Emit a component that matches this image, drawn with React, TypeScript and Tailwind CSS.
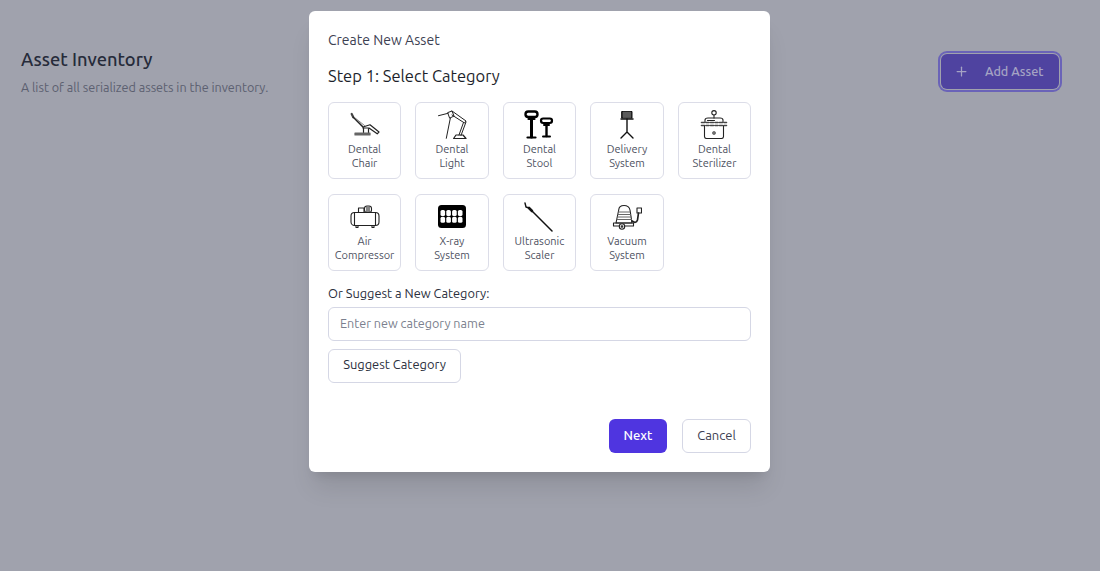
import React from 'react';
import { Plus } from 'lucide-react';

const FONT = 'font-["Ubuntu","Noto_Sans",sans-serif]';

function ChairIcon() {
  return (
    <svg width="30" height="25" viewBox="0 0 30 25" fill="none" stroke="#222" strokeWidth="1.2" strokeLinecap="round" strokeLinejoin="round">
      <path d="M1.700 2l1.600 3.300" strokeWidth="2.200" stroke="#444" />
      <path d="M3.300 5.300L12.500 14.500" strokeWidth="1.500" />
      <path d="M4.500 5.500L14.500 13.500" strokeWidth="0.800" stroke="#666" />
      <path d="M13 15l7-2.200 9 7.200-1.800 1.800-8.200-5.800h-6z" />
      <path d="M13.500 16v4.500M18.500 16.500v4" />
      <path d="M5 21h15v2H5z" fill="#666" stroke="#666" />
    </svg>
  );
}

function LightIcon() {
  return (
    <svg width="29" height="29" viewBox="0 0 29 29" fill="none" stroke="#222" strokeWidth="1" strokeLinecap="round" strokeLinejoin="round">
      <path d="M0.500 5.700L10 3.300" />
      <path d="M10 2.500l4-1.500 2 5-4 2z" />
      <path d="M12.300 8.300L8.300 28.300" />
      <path d="M14 1l14 10-1.500 2L14 5" />
      <path d="M28 12l-5 13.500M25.500 12.500L21 25" />
      <path d="M18 25h7l3 3.500H15.600z" strokeWidth="1.200" />
    </svg>
  );
}

function StoolIcon() {
  return (
    <svg width="30" height="29" viewBox="0 0 30 29" fill="none" stroke="#000" strokeLinecap="round" strokeLinejoin="round">
      <rect x="1.500" y="1.500" width="12" height="5.500" rx="2.700" strokeWidth="2.400" />
      <path d="M4.500 9h6" strokeWidth="2.200" />
      <path d="M7.500 9v18" strokeWidth="3" />
      <path d="M3.500 27.500h8" strokeWidth="2.200" />
      <rect x="17" y="8.500" width="11" height="4.500" rx="2.200" strokeWidth="2.200" />
      <path d="M20 15h5" strokeWidth="2" />
      <path d="M22.500 15v11" strokeWidth="2.400" />
      <path d="M19 26.500h7" strokeWidth="2" />
    </svg>
  );
}

function DeliveryIcon() {
  return (
    <svg width="14" height="28" viewBox="0 0 14 28" fill="none" stroke="#111" strokeLinecap="round" strokeLinejoin="round">
      <rect x="2" y="0.500" width="10" height="6.500" fill="#333" strokeWidth="1" />
      <path d="M4 1v6M6 1v6M8 1v6M10 1v6" stroke="#bbb" strokeWidth="0.600" />
      <path d="M1 8h12" strokeWidth="1.500" />
      <path d="M7 8v13M7 21l-6 6M7 21l6 6" strokeWidth="1.400" />
    </svg>
  );
}

function SterilizerIcon() {
  return (
    <svg width="28" height="29" viewBox="0 0 28 29" fill="none" stroke="#222" strokeWidth="1.100" strokeLinecap="round" strokeLinejoin="round">
      <circle cx="14" cy="2.800" r="2.200" />
      <path d="M14 5v3" />
      <path d="M5 12v-2q0-2 3-2h12q3 0 3 2v2" />
      <path d="M7.500 10.500h7" />
      <path d="M1.500 12.500h25M1.500 15.500h25" strokeWidth="1.600" strokeDasharray="3 1.500" stroke="#444" />
      <path d="M4.500 16v10.500q0 2 2 2h15q2 0 2-2V16" />
      <circle cx="14" cy="23" r="1.200" />
    </svg>
  );
}

function CompressorIcon() {
  return (
    <svg width="30" height="23" viewBox="0 0 30 23" fill="none" stroke="#222" strokeWidth="1.100" strokeLinecap="round" strokeLinejoin="round">
      <rect x="1" y="7.500" width="28" height="13" rx="3.500" />
      <path d="M4.500 8v12M25.500 8v12" />
      <path d="M8.500 7.500V3h5.500v4.500" />
      <rect x="14.500" y="1" width="7" height="6.500" rx="2.500" />
      <path d="M17 2v5M19 2v5" />
      <path d="M6 20.500v2h2v-2M22 20.500v2h2v-2" />
    </svg>
  );
}

function XrayIcon() {
  return (
    <svg width="28" height="23" viewBox="0 0 28 23">
      <rect width="28" height="23" rx="3.500" fill="#000" />
      {[2.500, 8.300, 14.100, 19.900].map(x => (
        <g key={x} fill="#fff">
          <rect x={x} y="5" width="4.600" height="6" rx="1.600" />
          <rect x={x} y="11.800" width="4.600" height="6" rx="1.600" />
        </g>
      ))}
    </svg>
  );
}

function ScalerIcon() {
  return (
    <svg width="30" height="30" viewBox="0 0 30 30" fill="none" stroke="#111" strokeLinecap="round" strokeLinejoin="round">
      <path d="M1 1l1 4 3 1" strokeWidth="1.400" />
      <path d="M5 6l3 3" strokeWidth="2.600" />
      <path d="M8 9l20 20" strokeWidth="1.500" />
    </svg>
  );
}

function VacuumIcon() {
  return (
    <svg width="30" height="26" viewBox="0 0 30 26" fill="none" stroke="#222" strokeWidth="1.100" strokeLinecap="round" strokeLinejoin="round">
      <path d="M6.700 6L4 19h16L18 6q-1-4.500-6-4.500T6.700 6z" />
      <path d="M6.500 8h11M6 10.500h12.500M5.500 13h13.500M5 15.500h14.500" strokeWidth="1" stroke="#666" />
      <path d="M1.500 19h20v3h-20z" />
      <circle cx="10" cy="22.500" r="2.700" fill="#fff" />
      <circle cx="10" cy="22.500" r="0.800" />
      <path d="M20 17q4 3 5.500-1l1-7" strokeWidth="1.700" />
      <path d="M25 4h4.500v5H25z" />
    </svg>
  );
}

const categories = [
  { first: 'Dental', second: 'Chair', icon: <ChairIcon /> },
  { first: 'Dental', second: 'Light', icon: <LightIcon /> },
  { first: 'Dental', second: 'Stool', icon: <StoolIcon /> },
  { first: 'Delivery', second: 'System', icon: <DeliveryIcon /> },
  { first: 'Dental', second: 'Sterilizer', icon: <SterilizerIcon /> },
  { first: 'Air', second: 'Compressor', icon: <CompressorIcon /> },
  { first: 'X-ray', second: 'System', icon: <XrayIcon /> },
  { first: 'Ultrasonic', second: 'Scaler', icon: <ScalerIcon /> },
  { first: 'Vacuum', second: 'System', icon: <VacuumIcon /> },
];

export default function App() {
  return (
    <div className={`relative h-[571px] overflow-hidden bg-[#a0a2ad] ${FONT}`}>
      <div className="flex items-start justify-between pl-[21px] pr-[41px] pt-[48px]">
        <div>
          <h1 className="text-[18.3px] leading-[22px] font-medium text-[#262b3a]">Asset Inventory</h1>
          <p className="mt-[7px] text-[12.6px] leading-5 text-[#5c6070]">A list of all serialized assets in the inventory.</p>
        </div>
        <button type="button" className="mt-[6px] flex h-[35px] w-[118px] items-center rounded-md bg-[#4f43a0] pl-[13px] text-[12.6px] font-medium text-[#a5a3c4] ring-2 ring-[#6a63b8] ring-offset-1 ring-offset-[#a0a2ad]">
          <Plus className="h-[15px] w-[15px]" />
          <span className="ml-[16px] -mt-[1px]">Add Asset</span>
        </button>
      </div>

      <div className="absolute top-[11px] left-[309px] w-[461px] h-[461px] rounded-md bg-white px-[19px] pt-[19px] shadow-xl">
        <h2 className="text-sm leading-[20px] text-[#3d4152]">Create New Asset</h2>
        <h3 className="mt-[15px] text-[16.5px] leading-[22px] text-[#1c1f2b]">Step 1: Select Category</h3>

        <div className="mt-[15px] grid grid-cols-5 gap-x-[14.4px] gap-y-[15px]">
          {categories.map((c, i) => (
            <button
              key={i}
              type="button"
              className="flex h-[77px] flex-col items-center rounded-md border border-[#dcdde8] bg-white"
            >
              <div className="flex h-[39px] items-center justify-center pt-[4px]">{c.icon}</div>
              <div className="text-[11px] leading-[14px] text-[#4e5262]">
                <div>{c.first}</div>
                <div>{c.second}</div>
              </div>
            </button>
          ))}
        </div>

        <label className="mt-[14px] block text-[12.8px] leading-[16px] text-[#2b2f3d]">Or Suggest a New Category:</label>
        <input
          type="text"
          placeholder="Enter new category name"
          className="mt-[6px] block h-[34px] w-full rounded-md border border-[#d5d7e5] bg-white pl-[11px] pb-[3px] text-[12.6px] outline-none placeholder:text-[#7b7f8e]"
        />
        <button type="button" className="mt-[8px] block h-[34px] w-[133px] rounded-md border border-[#d5d7e5] bg-white pb-[2px] text-[12.9px] text-[#2b2f3d]">
          Suggest Category
        </button>

        <div className="mt-[36px] flex justify-end gap-[15px]">
          <button type="button" className="h-[34px] w-[58px] rounded-md bg-[#4f35e0] text-[13px] font-medium text-white">Next</button>
          <button type="button" className="h-[34px] w-[69px] rounded-md border border-[#d5d7e5] bg-white text-[13px] text-[#3d4152]">Cancel</button>
        </div>
      </div>
    </div>
  );
}
